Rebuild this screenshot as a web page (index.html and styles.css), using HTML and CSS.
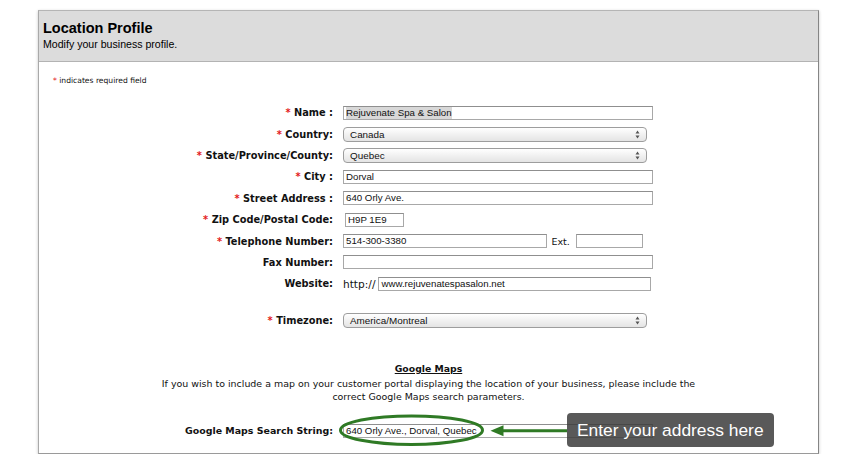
FILE: index.html
```html
<!DOCTYPE html>
<html>
<head>
<meta charset="utf-8">
<link rel="stylesheet" href="styles.css">
</head>
<body>
<div class="panel">
  <div class="header">
    <h1 class="title">Location Profile</h1>
    <p class="subtitle">Modify your business profile.</p>
  </div>
  <div class="content">
    <p class="req"><span class="star">*</span> indicates required field</p>

    <div class="form">
      <div class="row">
        <div class="label"><span class="star">*</span> Name :</div>
        <div class="cell"><div class="field w-310"><span class="hl">Rejuvenate Spa &amp; Salon</span></div></div>
      </div>
      <div class="row">
        <div class="label"><span class="star">*</span> Country:</div>
        <div class="cell"><div class="select"><span>Canada</span><svg class="updown" viewBox="0 0 5 9" width="5" height="9"><path d="M2.5 0.5 L4.5 3.5 L0.5 3.5 Z M2.5 8.5 L4.5 5.5 L0.5 5.5 Z" fill="#555"/></svg></div></div>
      </div>
      <div class="row">
        <div class="label"><span class="star">*</span> State/Province/County:</div>
        <div class="cell"><div class="select"><span>Quebec</span><svg class="updown" viewBox="0 0 5 9" width="5" height="9"><path d="M2.5 0.5 L4.5 3.5 L0.5 3.5 Z M2.5 8.5 L4.5 5.5 L0.5 5.5 Z" fill="#555"/></svg></div></div>
      </div>
      <div class="row">
        <div class="label"><span class="star">*</span> City :</div>
        <div class="cell"><div class="field w-310">Dorval</div></div>
      </div>
      <div class="row">
        <div class="label"><span class="star">*</span> Street Address :</div>
        <div class="cell"><div class="field w-310">640 Orly Ave.</div></div>
      </div>
      <div class="row">
        <div class="label"><span class="star">*</span> Zip Code/Postal Code:</div>
        <div class="cell"><div class="field w-zip">H9P 1E9</div></div>
      </div>
      <div class="row">
        <div class="label"><span class="star">*</span> Telephone Number:</div>
        <div class="cell">
          <div class="field w-204">514-300-3380</div>
          <span class="plain ext">Ext.</span>
          <div class="field w-67"></div>
        </div>
      </div>
      <div class="row">
        <div class="label">Fax Number:</div>
        <div class="cell"><div class="field w-310"></div></div>
      </div>
      <div class="row">
        <div class="label">Website:</div>
        <div class="cell">
          <span class="plain http">http://</span>
          <div class="field w-273">www.rejuvenatespasalon.net</div>
        </div>
      </div>
      <div class="row tz">
        <div class="label"><span class="star">*</span> Timezone:</div>
        <div class="cell"><div class="select"><span>America/Montreal</span><svg class="updown" viewBox="0 0 5 9" width="5" height="9"><path d="M2.5 0.5 L4.5 3.5 L0.5 3.5 Z M2.5 8.5 L4.5 5.5 L0.5 5.5 Z" fill="#555"/></svg></div></div>
      </div>
    </div>

    <div class="maps">
      <h2 class="maps-title">Google Maps</h2>
      <p class="maps-text">If you wish to include a map on your customer portal displaying the location of your business, please include the<br>correct Google Maps search parameters.</p>
    </div>

    <div class="row search">
      <div class="label label-search">Google Maps Search String:</div>
      <div class="cell"><div class="field w-310">640 Orly Ave., Dorval, Quebec</div></div>
      <svg class="annot" width="240" height="38" viewBox="0 0 240 38">
        <ellipse cx="73.5" cy="18.2" rx="71" ry="14.3" fill="none" stroke="#2f7a25" stroke-width="3"/>
        <line x1="162" y1="18.7" x2="229" y2="18.7" stroke="#2f7a25" stroke-width="3"/>
        <path d="M152.5 18.7 L165.5 13.2 L165.5 24.2 Z" fill="#2f7a25"/>
      </svg>
      <div class="tooltip">Enter your address here</div>
    </div>
  </div>
</div>
</body>
</html>
```

FILE: styles.css
```css
html, body {
  margin: 0;
  padding: 0;
  background: #fff;
}

body {
  font-family: "Liberation Sans", Arial, sans-serif;
  color: #111;
}

.panel {
  margin: 10px 0 0 38px;
  width: 781px;
  box-sizing: border-box;
  border-top: 1px solid #b5b5b5;
  border-left: 1px solid #a9a9a9;
  border-right: 1px solid #858585;
  border-bottom: 1px solid #9a9a9a;
  box-shadow: 0 1px 3px rgba(0, 0, 0, 0.22);
  background: #fff;
}

.header {
  background: #dcdcdc;
  border-bottom: 1px solid #b3b3b3;
  box-sizing: content-box;
  padding: 7.8px 0 0 4px;
  height: 42.2px;
}

.title {
  margin: 0;
  font-family: "Liberation Sans", Arial, sans-serif;
  font-weight: bold;
  font-size: 14.5px;
  line-height: 18px;
  color: #000;
}

.subtitle {
  margin: 0;
  font-size: 10.6px;
  line-height: 15px;
  color: #000;
}

.content {
  padding: 12.7px 0 11.9px 0;
}

.req {
  margin: 0 0 15.3px 14px;
  font-family: "DejaVu Sans", sans-serif;
  font-size: 7.6px;
  line-height: 12px;
  color: #111;
}

.star {
  color: #e31b1b;
}

.row {
  display: grid;
  grid-template-columns: 294px 1fr;
  column-gap: 10px;
  height: 21.4px;
  align-items: center;
}

.row.tz {
  margin-top: 15.4px;
}

.label {
  text-align: right;
  font-family: "DejaVu Sans", sans-serif;
  font-weight: bold;
  font-size: 9.8px;
  white-space: nowrap;
  color: #111;
}

.label-search {
  font-size: 9.45px;
}

.cell {
  display: flex;
  align-items: center;
}

.field {
  box-sizing: border-box;
  height: 14px;
  border: 1px solid #a8a8a8;
  border-top-color: #8f8f8f;
  background: #fff;
  padding: 0 0 0 2px;
  font-size: 9.7px;
  line-height: 12px;
  white-space: nowrap;
  overflow: hidden;
  color: #111;
}

.hl {
  background: #d8d8d8;
  padding: 1px 0;
}

.w-310 { width: 310px; }
.w-273 { width: 273px; }
.w-204 { width: 204px; }
.w-67 { width: 67px; }
.w-zip { width: 59px; margin-left: 2px; }

.select {
  box-sizing: border-box;
  width: 304px;
  height: 15px;
  border: 1px solid #9d9d9d;
  border-radius: 4px;
  background: linear-gradient(#ffffff, #f1f1f1 50%, #e4e4e4);
  display: flex;
  align-items: center;
  justify-content: space-between;
  padding: 0 6px 0 6px;
  font-size: 9.9px;
  color: #111;
}

.updown {
  display: block;
}

.plain {
  font-family: "DejaVu Sans", sans-serif;
  font-size: 10px;
  color: #111;
}

.ext {
  margin: 0 6px 0 4.5px;
  font-size: 9.5px;
}

.http {
  font-size: 10.6px;
  margin-right: 3px;
}

.maps {
  text-align: center;
  margin-top: 30.8px;
}

.maps-title {
  margin: 0 0 2px 0;
  font-family: "DejaVu Sans", sans-serif;
  font-weight: bold;
  font-size: 9.3px;
  line-height: 13px;
  text-decoration: underline;
  color: #111;
}

.maps-text {
  margin: 0;
  font-family: "DejaVu Sans", sans-serif;
  font-size: 9.45px;
  line-height: 13px;
  color: #111;
}

.search {
  position: relative;
  margin-top: 16.8px;
}

.annot {
  position: absolute;
  left: 299px;
  top: -8px;
}

.tooltip {
  position: absolute;
  left: 528px;
  top: -7.3px;
  width: 207px;
  height: 34px;
  box-sizing: border-box;
  padding-left: 10px;
  border-radius: 4px;
  background: rgba(60, 60, 60, 0.85);
  color: #fff;
  font-size: 17.4px;
  line-height: 34px;
  white-space: nowrap;
}
```
